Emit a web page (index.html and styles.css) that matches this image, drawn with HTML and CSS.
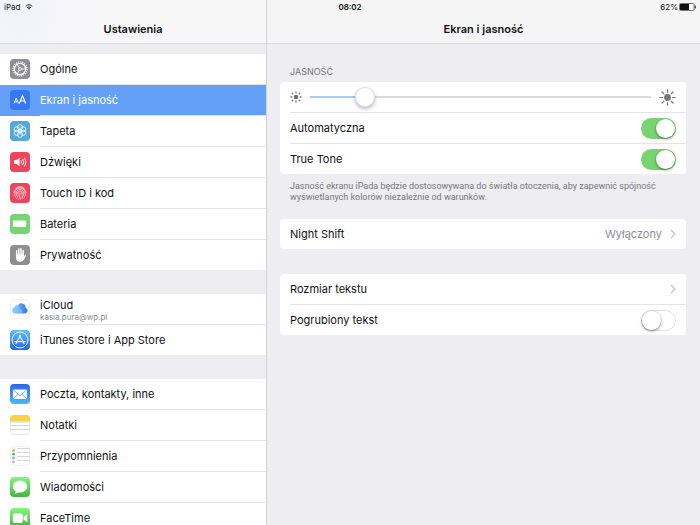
FILE: index.html
```html
<!DOCTYPE html>
<html lang="pl">
<head>
<meta charset="utf-8">
<meta name="viewport" content="width=device-width, initial-scale=1">
<title>Ustawienia</title>
<link rel="stylesheet" href="styles.css">
</head>
<body>
<div class="status">
  <div class="status-left">
    <span>iPad</span>
    <svg class="wifi" viewBox="0 0 16 12" fill="none" stroke="#222" stroke-width="2"><path d="M1.5 4.5a9.500 9.500 0 0 1 13 0M4 7.500a6 6 0 0 1 8 0"/><path d="M8 11.500L5.800 9a3.400 3.400 0 0 1 4.400 0z" fill="#222" stroke="none"/></svg>
  </div>
  <time class="clock">08:02</time>
  <div class="status-right">
    <span>62%</span>
    <svg class="battery" viewBox="0 0 17 8"><rect x=".5" y=".5" width="14.500" height="7" rx="1" fill="#fff" stroke="#777"/><rect x="1" y="1" width="9" height="6" fill="#111"/><path d="M16 2.500q1 1.500 0 3z" fill="#222" stroke="#222" stroke-width=".6"/></svg>
  </div>
</div>
<div class="app">
  <nav class="sidebar" aria-label="Ustawienia">
    <header class="bar bar-side"><h1>Ustawienia</h1></header>
    <div class="menu">
      <ul class="group">
        <li><a class="item" href="#ogolne">
          <svg class="icon" viewBox="0 0 20 20"><rect width="20" height="20" rx="4" fill="#8e8e93"/><g fill="none" stroke="#fff"><circle cx="10" cy="10" r="7" stroke-width="1.200" stroke-dasharray="1.100 1.100"/><circle cx="10" cy="10" r="5.700" stroke-width="1.300"/><circle cx="10" cy="10" r="1.500" stroke-width=".8"/><path d="M11.500 10h4M9.200 8.700L7.200 5.200M9.200 11.300l-2 3.500" stroke-width=".9"/></g></svg>
          <span class="label">Ogólne</span></a></li>
        <li><a class="item selected" href="#ekran" aria-current="page">
          <svg class="icon" viewBox="0 0 20 20"><rect width="20" height="20" rx="4" fill="#3478f6"/><g fill="none" stroke="#fff"><path d="M4 13.500l2.200-5.500 2.200 5.500M4.700 11.800h3" stroke-width="1"/><path d="M9.300 13.500l3.200-8 3.200 8M10.400 11h4.200" stroke-width="1.200"/></g></svg>
          <span class="label">Ekran i jasność</span></a></li>
        <li><a class="item" href="#tapeta">
          <svg class="icon" viewBox="0 0 20 20"><rect width="20" height="20" rx="4" fill="#55a8d8"/><g fill="none" stroke="#fff" stroke-width=".8"><circle cx="10" cy="10" r="1.500"/><circle cx="10" cy="6.300" r="2.600"/><circle cx="13.200" cy="8.200" r="2.600"/><circle cx="13.200" cy="11.800" r="2.600"/><circle cx="10" cy="13.700" r="2.600"/><circle cx="6.800" cy="11.800" r="2.600"/><circle cx="6.800" cy="8.200" r="2.600"/></g></svg>
          <span class="label">Tapeta</span></a></li>
        <li><a class="item" href="#dzwieki">
          <svg class="icon" viewBox="0 0 20 20"><rect width="20" height="20" rx="4" fill="#ee445c"/><path d="M4 8.200h2.300L9.500 5.800v8.400l-3.200-2.400H4z" fill="#fff"/><path d="M11 8.300q1 1.700 0 3.400M12.800 7q1.800 3 0 6M14.600 5.700q2.600 4.300 0 8.600" fill="none" stroke="#fff" stroke-width=".9"/></svg>
          <span class="label">Dźwięki</span></a></li>
        <li><a class="item" href="#touchid">
          <svg class="icon" viewBox="0 0 20 20"><rect width="20" height="20" rx="4" fill="#ee445c"/><g fill="none" stroke="#ffd5da" stroke-width=".8" stroke-linecap="round"><path d="M5.800 5.200a6.300 6.300 0 0 1 8.400 0M3.800 9.800a6.300 6.300 0 0 1 12.400 0M4.200 12.600c.8-1 .8-2 .8-2.600a5 5 0 0 1 10 0c0 1 .2 1.800.6 2.600M5.300 14.200c1.100-1.600 1.100-2.800 1.100-4.200a3.600 3.600 0 0 1 7.200 0c0 1.800.3 3 .9 4.200M6.800 15.500c1.200-2 1.200-3.500 1.200-5.500a2 2 0 0 1 4 0c0 2.400.2 3.800.9 5.500M8.800 16.200c.9-2 1.200-4 1.200-6.400M10.700 16.300l.3-2"/></g></svg>
          <span class="label">Touch ID i kod</span></a></li>
        <li><a class="item" href="#bateria">
          <svg class="icon" viewBox="0 0 20 20"><rect width="20" height="20" rx="4" fill="#76d572"/><rect x="3" y="6.500" width="13" height="6.600" rx="1" fill="#fff"/><path d="M16.500 8.500q1.400 1.300 0 2.600z" fill="#fff"/></svg>
          <span class="label">Bateria</span></a></li>
        <li><a class="item" href="#prywatnosc">
          <svg class="icon" viewBox="0 0 20 20"><rect width="20" height="20" rx="4" fill="#8e8e93"/><path d="M6.700 11V5.800M8.800 10V4M11 10V3.800M13.100 10.500V5.500" stroke="#fff" stroke-width="1.500" stroke-linecap="round"/><path d="M5.950 9.500h7.900v2.200l1-1.700q.8-.8 1.500-.1l-2.200 4.600q-1.200 2.200-3.900 2.200-4.300 0-4.300-4.500z" fill="#fff"/></svg>
          <span class="label">Prywatność</span></a></li>
      </ul>
      <ul class="group">
        <li><a class="item" href="#icloud">
          <svg class="icon" viewBox="0 0 20 20"><defs><linearGradient id="cloud"><stop offset="0" stop-color="#7fc8f8"/><stop offset="1" stop-color="#2f7af0"/></linearGradient></defs><rect x=".5" y=".5" width="19" height="19" rx="4" fill="#fff" stroke="#eee"/><path d="M5 14.500a3 3 0 0 1-.6-5.900 2.500 2.500 0 0 1 3.400-1.900 4.100 4.100 0 0 1 7.800 2 3 3 0 0 1-.4 5.800z" fill="url(#cloud)"/><path d="M7.800 6.700q2.200.8 2.300 3.300 2.200.4 2.200 2.400a2.200 2.200 0 0 1-2 2.100H5a3 3 0 0 1-.6-5.900 2.500 2.500 0 0 1 3.400-1.900z" fill="#9bd5fa" opacity=".45"/></svg>
          <span class="label">iCloud<small>kasia.pura@wp.pl</small></span></a></li>
        <li><a class="item" href="#store">
          <svg class="icon" viewBox="0 0 20 20"><defs><linearGradient id="store" x2="0" y2="1"><stop offset="0" stop-color="#5fc4f8"/><stop offset="1" stop-color="#2563ee"/></linearGradient></defs><rect width="20" height="20" rx="4" fill="url(#store)"/><g fill="none" stroke="#e9f5ff"><circle cx="10" cy="10" r="8" stroke-width="1"/><path d="M10.600 5L5.800 14M9.300 5l4.900 9M4.500 11.600h11" stroke-width="1.200"/></g></svg>
          <span class="label">iTunes Store i App Store</span></a></li>
      </ul>
      <ul class="group">
        <li><a class="item" href="#poczta">
          <svg class="icon" viewBox="0 0 20 20"><defs><linearGradient id="mail" x2="0" y2="1"><stop offset="0" stop-color="#2c64ea"/><stop offset="1" stop-color="#4db9f8"/></linearGradient></defs><rect width="20" height="20" rx="4" fill="url(#mail)"/><rect x="3" y="5.500" width="14" height="9.500" rx="1.200" fill="#fff"/><path d="M3.500 6l6.500 5.800L16.500 6M3.500 14.600l4.600-4.400M16.500 14.600l-4.600-4.400" fill="none" stroke="#4c97f0" stroke-width=".8"/></svg>
          <span class="label">Poczta, kontakty, inne</span></a></li>
        <li><a class="item" href="#notatki">
          <svg class="icon" viewBox="0 0 20 20"><rect x=".5" y=".5" width="19" height="19" rx="4" fill="#fff" stroke="#e8e8e8"/><path d="M0 6.500V4a4 4 0 0 1 4-4h12a4 4 0 0 1 4 4v2.500z" fill="#f8d24a"/><path d="M0 10.500h20M0 14.500h20M0 7h20" stroke="#d4d4d4"/></svg>
          <span class="label">Notatki</span></a></li>
        <li><a class="item" href="#przypomnienia">
          <svg class="icon" viewBox="0 0 20 20"><rect x=".5" y=".5" width="19" height="19" rx="4" fill="#fff" stroke="#ededed"/><path d="M7 2.500h13M7 6.500h13M7 10.500h13M7 14.500h13" stroke="#d8d8d8"/><circle cx="3.500" cy="4.500" r="1.400" fill="#f4a14a"/><circle cx="3.500" cy="8.200" r="1.400" fill="#4aa0ee"/><circle cx="3.500" cy="12" r="1.400" fill="#70d258"/><circle cx="3.500" cy="15.900" r="1.400" fill="#b9b9bd"/></svg>
          <span class="label">Przypomnienia</span></a></li>
        <li><a class="item" href="#wiadomosci">
          <svg class="icon" viewBox="0 0 20 20"><defs><linearGradient id="green" x2="0" y2="1"><stop offset="0" stop-color="#86f47f"/><stop offset="1" stop-color="#43b63f"/></linearGradient></defs><rect width="20" height="20" rx="4" fill="url(#green)"/><ellipse cx="10" cy="9.500" rx="7.200" ry="6" fill="#fff"/><path d="M6 13.500q0 2-1.600 3 2.600 0 4.400-1.500z" fill="#fff"/></svg>
          <span class="label">Wiadomości</span></a></li>
        <li><a class="item" href="#facetime">
          <svg class="icon" viewBox="0 0 20 20"><rect width="20" height="20" rx="4" fill="url(#green)"/><rect x="2.800" y="5.500" width="10" height="9.500" rx="2" fill="#fff"/><path d="M13.500 9l3.200-2.700q.6-.3.600.4v7q0 .7-.6.300l-3.200-2.600z" fill="#fff"/></svg>
          <span class="label">FaceTime</span></a></li>
      </ul>
    </div>
  </nav>
  <main class="detail">
    <header class="bar"><h2>Ekran i jasność</h2></header>
    <div class="content">
      <h3 id="brightness">Jasność</h3>
      <section class="card">
        <div class="row">
          <svg class="sun-small" viewBox="0 0 12 12" stroke="#707070" stroke-linecap="round"><circle cx="6" cy="6" r="2.300" fill="#707070" stroke="none"/><path d="M6 .9v.9M6 10.200v.9M.9 6h.9M10.200 6h.9M2.300 2.300l.6.600M9.100 9.100l.6.600M2.300 9.700l.6-.6M9.100 2.900l.6-.6" stroke-width="1.300"/></svg>
          <input class="slider" type="range" min="0" max="100" value="14" aria-labelledby="brightness">
          <svg class="sun-large" viewBox="0 0 17 17" stroke="#777" stroke-linecap="round"><circle cx="8.500" cy="8.500" r="3.400" fill="#777" stroke="none"/><path d="M8.500.8v2.600M8.500 13.600v2.600M.8 8.500h2.600M13.600 8.500h2.600M3 3l1.900 1.900M12.100 12.100L14 14M3 14l1.900-1.900M12.100 4.900L14 3" stroke-width="1.200"/></svg>
        </div>
        <label class="row"><span>Automatyczna</span><input class="switch" type="checkbox" checked></label>
        <label class="row"><span>True Tone</span><input class="switch" type="checkbox" checked></label>
      </section>
      <p class="note">Jasność ekranu iPada będzie dostosowywana do światła otoczenia, aby zapewnić spójność wyświetlanych kolorów niezależnie od warunków.</p>
      <section class="card">
        <a class="row" href="#night-shift"><span>Night Shift</span><span class="value">Wyłączony</span><svg class="chevron" viewBox="0 0 6 10"><path d="M1 1l4 4-4 4"/></svg></a>
      </section>
      <section class="card">
        <a class="row" href="#rozmiar"><span>Rozmiar tekstu</span><svg class="chevron" viewBox="0 0 6 10"><path d="M1 1l4 4-4 4"/></svg></a>
        <label class="row"><span>Pogrubiony tekst</span><input class="switch" type="checkbox"></label>
      </section>
    </div>
  </main>
</div>
</body>
</html>
```
FILE: styles.css
```css
* {
  box-sizing: border-box;
}

body {
  margin: 0;
  font-family: Inter, "Liberation Sans", sans-serif;
  font-size: 11px;
  line-height: 16px;
  color: #111;
  background: #eeedf2;
}

h1, h2, h3, p, ul {
  margin: 0;
  padding: 0;
  font-size: inherit;
}

ul {
  list-style: none;
}

a {
  color: inherit;
  text-decoration: none;
}

svg {
  display: block;
  flex: none;
}

.status {
  position: absolute;
  top: 0;
  left: 0;
  right: 0;
  display: grid;
  grid-template-columns: 1fr auto 1fr;
  align-items: center;
  height: 14px;
  padding: 0 4px;
  font-size: 8px;
  line-height: 14px;
}

.status-left,
.status-right {
  display: flex;
  align-items: center;
  gap: 5px;
}

.status-right {
  justify-content: flex-end;
  gap: 1px;
}

.clock {
  font-weight: 600;
}

.wifi {
  width: 8px;
  height: 6px;
}

.battery {
  width: 17px;
  height: 8px;
}

.app {
  display: grid;
  grid-template-columns: 38% 1fr;
  height: 100vh;
}

.sidebar,
.detail {
  min-width: 0;
  min-height: 0;
  display: flex;
  flex-direction: column;
}

.detail {
  border-left: 1px solid #d4d4d8;
}

.bar {
  flex: none;
  height: 44px;
  padding-top: 15px;
  background: #f5f5f5;
  border-bottom: 1px solid #dcdcde;
  text-align: center;
  line-height: 28px;
}

.bar h1,
.bar h2 {
  font-weight: 600;
}

.bar-side {
  background: radial-gradient(circle at 8% 30%, #f2f2fc, #f7f7f8 30%, #f7f7f7);
}

.menu,
.content {
  flex: 1;
  min-height: 0;
  overflow-y: auto;
  scrollbar-width: none;
}

.menu {
  display: flex;
  flex-direction: column;
  gap: 24px;
  padding-top: 10px;
}

.group {
  background: #fff;
}

.item {
  display: flex;
  align-items: center;
  gap: 10px;
  padding-left: 10px;
}

.icon {
  width: 20px;
  height: 20px;
  margin-bottom: 1px;
}

.label {
  flex: 1;
  min-height: 30px;
  display: flex;
  flex-direction: column;
  justify-content: center;
}

.label small {
  font-size: 8px;
  line-height: 8px;
  color: #8a8a8e;
}

.group li:not(:last-child) .label {
  border-bottom: 1px solid #e4e4e6;
  min-height: 31px;
}

.selected {
  background: #64a0f8;
  color: #fff;
}

.content {
  padding: 20px 14px 24px 13px;
}

.content h3 {
  padding: 0 10px 2px;
  font-size: 9px;
  font-weight: 400;
  text-transform: uppercase;
  color: #77777c;
}

.card {
  background: #fff;
  border-radius: 4px;
  margin-bottom: 25px;
  padding-left: 10px;
}

.row {
  display: flex;
  align-items: center;
  gap: 8px;
  min-height: 30px;
  padding-right: 10px;
}

.row > span:first-child {
  flex: 1;
}

.row:not(:last-child) {
  min-height: 31px;
  border-bottom: 1px solid #e4e4e6;
}

.value {
  color: #8e8e93;
}

.chevron {
  width: 6px;
  height: 10px;
  fill: none;
  stroke: #c3c3c8;
  stroke-width: 1.2;
}

.sun-small {
  width: 12px;
  height: 12px;
}

.sun-large {
  width: 17px;
  height: 17px;
}

.slider {
  appearance: none;
  flex: 1;
  min-width: 0;
  height: 20px;
  margin: 0;
  background: linear-gradient(90deg, #a5cbfa 16%, #dadada 16%) center / 100% 2px no-repeat;
}

.slider::-webkit-slider-thumb {
  appearance: none;
  width: 20px;
  height: 20px;
  border-radius: 50%;
  background: #fff;
  border: 1px solid #e0e0e0;
  box-shadow: 0 2px 4px rgba(0, 0, 0, 0.28);
}

.switch {
  appearance: none;
  display: flex;
  width: 35px;
  height: 21px;
  margin: 0;
  padding: 1px;
  border-radius: 11px;
  background: #fff;
  box-shadow: inset 0 0 0 1px #e2e2e2;
}

.switch::before {
  content: "";
  width: 19px;
  height: 19px;
  border-radius: 50%;
  background: #fff;
  box-shadow: 0 1px 3px rgba(0, 0, 0, 0.5);
}

.switch:checked {
  justify-content: flex-end;
  background: #76d572;
  box-shadow: none;
}

.note {
  margin: -18px 0 16px 10px;
  font-family: Roboto, Inter, sans-serif;
  font-size: 9px;
  line-height: 11px;
  color: #77777c;
}
```
